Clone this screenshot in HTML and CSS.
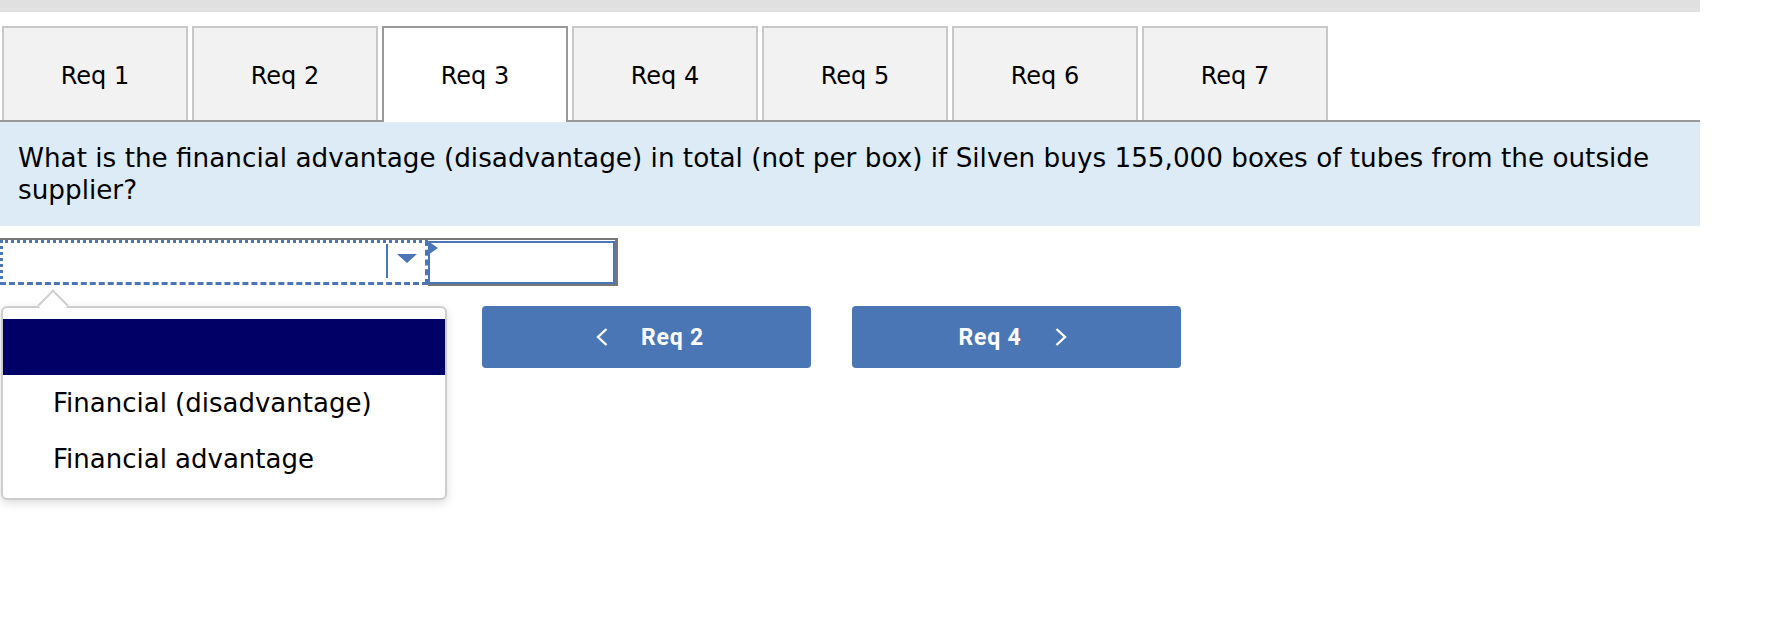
FILE: index.html
```html
<!DOCTYPE html>
<html lang="en">
<head>
<meta charset="utf-8">
<title>Req 3</title>
<link rel="stylesheet" href="styles.css">
</head>
<body>
<div class="topbar"></div>
<div class="tabs">
  <div class="tab">Req 1</div>
  <div class="tab">Req 2</div>
  <div class="tab active">Req 3</div>
  <div class="tab">Req 4</div>
  <div class="tab">Req 5</div>
  <div class="tab">Req 6</div>
  <div class="tab">Req 7</div>
</div>
<div class="question">What is the financial advantage (disadvantage) in total (not per box) if Silven buys 155,000 boxes of tubes from the outside supplier?</div>
<div class="answer">
  <div class="combo">
    <div class="select">
      <div class="select-value"></div>
      <div class="select-arrow"><span class="caret"></span></div>
    </div>
    <div class="input-wrap">
      <span class="flag"></span>
      <div class="input"></div>
    </div>
  </div>
  <div class="below">
    <div class="popup">
      <span class="pointer"></span>
      <div class="option selected"></div>
      <div class="option">Financial (disadvantage)</div>
      <div class="option">Financial advantage</div>
    </div>
    <div class="nav">
      <div class="btn prev">
        <svg class="chev" width="12" height="18" viewBox="0 0 12 18"><polyline points="10.5,1 2,9 10.5,17" fill="none" stroke="#fff" stroke-width="2.4"/></svg>
        <span>Req 2</span>
      </div>
      <div class="btn next">
        <span>Req 4</span>
        <svg class="chev" width="12" height="18" viewBox="0 0 12 18"><polyline points="1.5,1 10,9 1.5,17" fill="none" stroke="#fff" stroke-width="2.4"/></svg>
      </div>
    </div>
  </div>
</div>
</body>
</html>
```
FILE: styles.css
```css
html, body {
  margin: 0;
  padding: 0;
  background: #fff;
}
body {
  font-family: "DejaVu Sans", Verdana, sans-serif;
  color: #000;
  min-height: 630px;
}
.topbar {
  width: 1700px;
  height: 12px;
  background: #e0e0e0;
}
.tabs {
  width: 1700px;
  margin-top: 14px;
  padding-left: 2px;
  box-sizing: border-box;
  display: flex;
  align-items: flex-end;
  gap: 4px;
  border-bottom: 2px solid #999;
}
.tab {
  width: 186px;
  height: 94px;
  box-sizing: border-box;
  border: 2px solid #c8c8c8;
  border-bottom: none;
  background: #f2f2f2;
  display: flex;
  align-items: center;
  justify-content: center;
  padding-top: 4px;
  font-size: 24px;
}
.tab.active {
  height: 96px;
  margin-bottom: -2px;
  padding-top: 2px;
  background: #fff;
  border-color: #999;
}
.question {
  width: 1700px;
  box-sizing: border-box;
  background: #ddebf7;
  padding: 20px 18px 20px 18px;
  font-size: 26.25px;
  line-height: 32px;
}
.answer {
  margin-top: 12px;
}
.combo {
  display: flex;
  width: fit-content;
  border-top: 2px solid #777;
}
.select {
  width: 428px;
  height: 45px;
  box-sizing: border-box;
  border-top: 3px dotted #4a76b8;
  border-left: 3px dotted #4a76b8;
  border-bottom: 3px dashed #4a76b8;
  border-right: 3px dashed #4a76b8;
  display: flex;
}
.select-value {
  flex: 1;
  border-right: 2px solid #4a76b8;
  margin: 1px 0 4px;
}
.select-arrow {
  width: 37px;
  display: flex;
  justify-content: center;
  padding-top: 11px;
  box-sizing: border-box;
}
.caret {
  width: 0;
  height: 0;
  border-left: 10px solid transparent;
  border-right: 10px solid transparent;
  border-top: 9px solid #4a76b8;
}
.input-wrap {
  position: relative;
  border-right: 3px solid #777;
  border-bottom: 2px solid #777;
}
.input {
  width: 187px;
  height: 43px;
  box-sizing: border-box;
  border: 2px solid #4a76b8;
  margin-top: 1px;
}
.flag {
  position: absolute;
  left: 0;
  top: 1px;
  width: 0;
  height: 0;
  border-left: 10px solid #4a76b8;
  border-top: 7px solid transparent;
  border-bottom: 7px solid transparent;
}
.below {
  display: flex;
  align-items: flex-start;
  margin-top: 20px;
}
.popup {
  position: relative;
  margin-left: 1px;
  width: 446px;
  box-sizing: border-box;
  background: #fff;
  border: 2px solid #cdcdcd;
  border-radius: 6px;
  padding: 11px 0 11px;
  box-shadow: 0 3px 10px rgba(0, 0, 0, 0.14);
}
.pointer {
  position: absolute;
  left: 39px;
  top: -14px;
  width: 22px;
  height: 22px;
  background: #fff;
  border-top: 2px solid #cdcdcd;
  border-left: 2px solid #cdcdcd;
  box-sizing: border-box;
  transform: rotate(45deg);
}
.option {
  position: relative;
  height: 56px;
  line-height: 56px;
  padding-left: 50px;
  font-size: 26px;
}
.option.selected {
  background: #000066;
}
.nav {
  display: flex;
  gap: 41px;
  margin-left: 35px;
}
.btn {
  width: 329px;
  height: 62px;
  box-sizing: border-box;
  background: #4a76b5;
  border-radius: 4px;
  color: #fff;
  display: flex;
  align-items: center;
  justify-content: center;
  gap: 33px;
  font-family: Roboto, "Liberation Sans", sans-serif;
  font-weight: 700;
  font-size: 23px;
  letter-spacing: 0.8px;
}
.btn.prev {
  padding-left: 7px;
}
.btn.next {
  padding-right: 8px;
}
.chev {
  display: block;
}
```
